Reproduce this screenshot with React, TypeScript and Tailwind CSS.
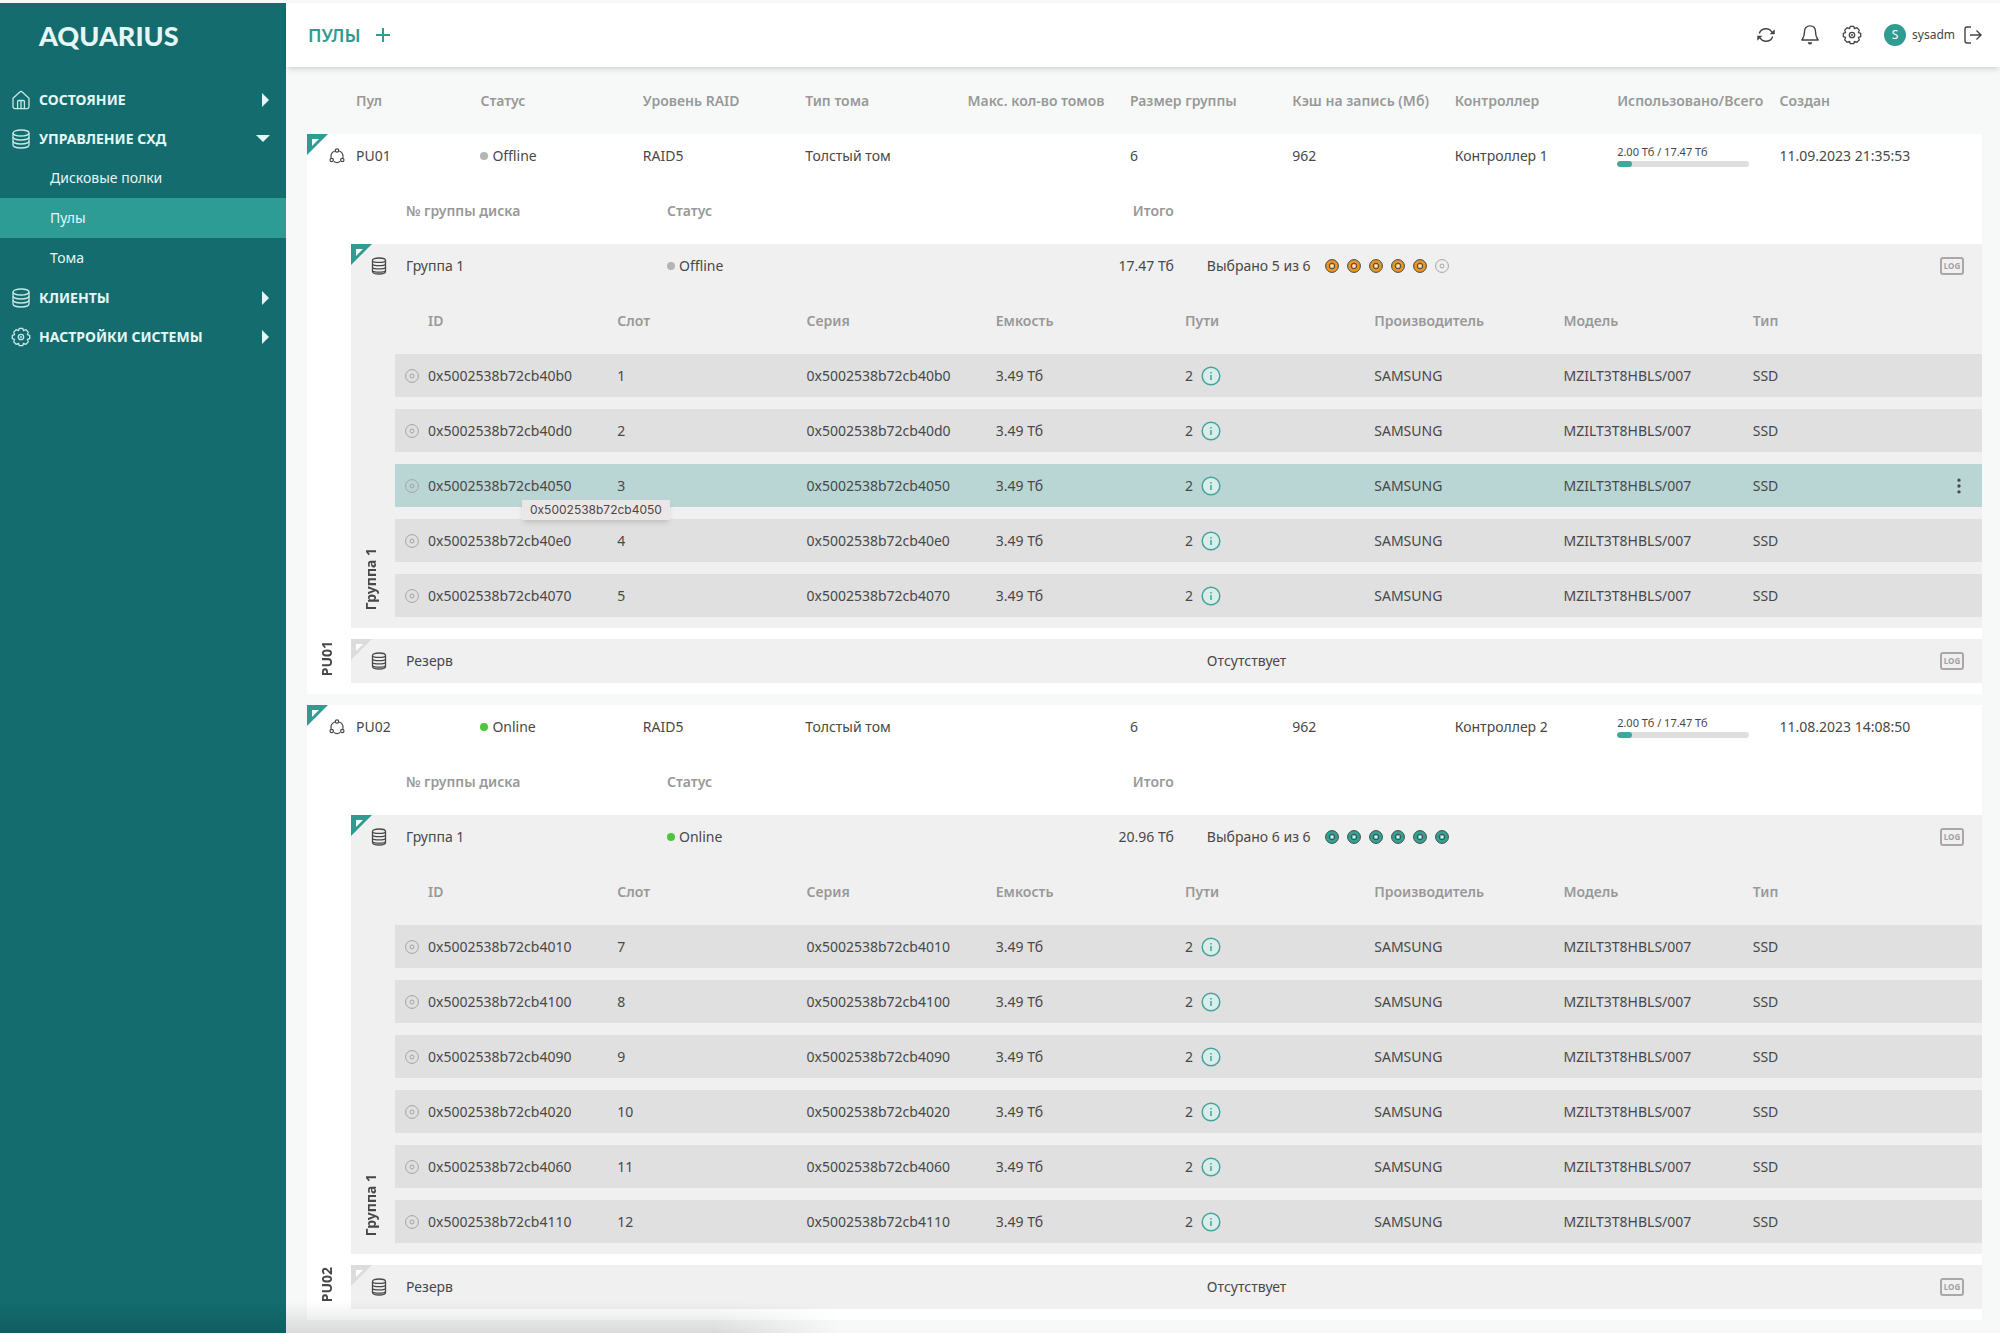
import { MoreVertical } from 'lucide-react';
import clsx from 'clsx';

type Disk = { id: string; slot: number };

type Pool = {
  name: string;
  online: boolean;
  controller: string;
  created: string;
  total: string;
  selected: number;
  disks: Disk[];
};

const POOLS: Pool[] = [
  {
    name: 'PU01',
    online: false,
    controller: 'Контроллер 1',
    created: '11.09.2023 21:35:53',
    total: '17.47 Тб',
    selected: 5,
    disks: [
      { id: '0x5002538b72cb40b0', slot: 1 },
      { id: '0x5002538b72cb40d0', slot: 2 },
      { id: '0x5002538b72cb4050', slot: 3 },
      { id: '0x5002538b72cb40e0', slot: 4 },
      { id: '0x5002538b72cb4070', slot: 5 },
    ],
  },
  {
    name: 'PU02',
    online: true,
    controller: 'Контроллер 2',
    created: '11.08.2023 14:08:50',
    total: '20.96 Тб',
    selected: 6,
    disks: [
      { id: '0x5002538b72cb4010', slot: 7 },
      { id: '0x5002538b72cb4100', slot: 8 },
      { id: '0x5002538b72cb4090', slot: 9 },
      { id: '0x5002538b72cb4020', slot: 10 },
      { id: '0x5002538b72cb4060', slot: 11 },
      { id: '0x5002538b72cb4110', slot: 12 },
    ],
  },
];

const HOVERED_DISK = '0x5002538b72cb4050';

const POOL_COLUMNS = [
  'Статус',
  'Уровень RAID',
  'Тип тома',
  'Макс. кол-во томов',
  'Размер группы',
  'Кэш на запись (Мб)',
  'Контроллер',
  'Использовано/Всего',
  'Создан',
];

const DISK_COLUMNS = ['ID', 'Слот', 'Серия', 'Емкость', 'Пути', 'Производитель', 'Модель', 'Тип'];

function HomeIcon() {
  return (
    <svg viewBox="0 0 20 20" className="size-5" fill="none" stroke="currentColor" strokeWidth="1.3">
      <path d="M2 8.2 8.8 1.9a1.8 1.8 0 0 1 2.4 0L18 8.2v8.6a1.8 1.8 0 0 1-1.8 1.8H3.8A1.8 1.8 0 0 1 2 16.8z" />
      <path d="M6.6 18.5v-7a1 1 0 0 1 1-1h4.8a1 1 0 0 1 1 1v7M10 10.5v8" />
    </svg>
  );
}

function DatabaseIcon() {
  return (
    <svg viewBox="0 0 20 20" className="size-5" fill="none" stroke="currentColor" strokeWidth="1.3">
      <ellipse cx="10" cy="4" rx="8" ry="3" />
      <path d="M2 4v12c0 1.700 3.600 3 8 3s8-1.300 8-3V4" />
      <path d="M2 8c0 1.700 3.600 3 8 3s8-1.300 8-3M2 12c0 1.700 3.600 3 8 3s8-1.300 8-3" />
    </svg>
  );
}

function GearIcon() {
  return (
    <svg viewBox="0 0 20 20" className="size-5" fill="none" stroke="currentColor" strokeWidth="1.3" strokeLinejoin="round">
      <path d="M8.300 1.300h3.400l.7 2.300 2.500-.9 2.400 2.400-.9 2.500 2.300.7v3.400l-2.300.7.9 2.500-2.400 2.400-2.500-.9-.7 2.300H8.300l-.7-2.300-2.500.9-2.400-2.400.9-2.500-2.300-.7V8.300l2.300-.7-.9-2.500 2.400-2.400 2.500.9z" />
      <circle cx="10" cy="10" r="2.700" />
      <circle cx="10" cy="10" r=".4" />
    </svg>
  );
}

function RefreshIcon() {
  return (
    <svg viewBox="0 0 20 20" className="size-5" fill="none" stroke="currentColor" strokeWidth="1.4">
      <path d="M3.300 8.500A7 7 0 0 1 16 7.300M16.700 11.500A7 7 0 0 1 4 12.700" />
      <path d="M18.700 4.300v5h-5zM1.300 15.700v-5h5z" fill="currentColor" stroke="none" />
    </svg>
  );
}

function BellIcon() {
  return (
    <svg viewBox="0 0 20 20" className="size-5" fill="none" stroke="currentColor" strokeWidth="1.3" strokeLinejoin="round">
      <path d="M10 .8c3.500 0 5.500 2.500 5.500 5.800 0 4.400 1 6.400 2.700 8.400H1.800c1.700-2 2.700-4 2.700-8.400C4.500 3.300 6.500.8 10 .8z" />
      <path d="M7.800 17.300h4.400a2.200 2.200 0 0 1-4.400 0z" fill="currentColor" stroke="none" />
    </svg>
  );
}

function LogoutIcon() {
  return (
    <svg viewBox="0 0 20 20" className="size-5" fill="none" stroke="currentColor" strokeWidth="1.4">
      <path d="M8 2H4a2 2 0 0 0-2 2v12a2 2 0 0 0 2 2h4M7 10h11M13.500 5.500 18 10l-4.500 4.500" />
    </svg>
  );
}

function PoolIcon() {
  return (
    <svg viewBox="0 0 16 16" className="size-4" fill="none" stroke="currentColor" strokeWidth="1.200">
      <path d="M5.800 3A6 6 0 0 0 2.200 9.800M10.200 3a6 6 0 0 1 3.600 6.800M4.800 13.600a6 6 0 0 0 6.400 0" />
      <circle cx="8" cy="2.500" r="1.700" />
      <circle cx="2.700" cy="12" r="1.700" />
      <circle cx="13.300" cy="12" r="1.700" />
    </svg>
  );
}

function GroupIcon() {
  return (
    <svg viewBox="0 0 16 18" className="h-[18px] w-4" fill="none" stroke="currentColor" strokeWidth="1.300">
      <path d="M1.500 3.500C1.500 2 4.400 1 8 1s6.500 1 6.500 2.500v11C14.500 16 11.600 17 8 17s-6.500-1-6.500-2.500z" />
      <path d="M1.500 4.200C3 5.700 13 5.700 14.500 4.200M1.500 7.500C3 9 13 9 14.500 7.500M1.500 10.800c1.500 1.500 11.500 1.500 13 0M1.500 14c1.500 1.500 11.500 1.500 13 0" />
    </svg>
  );
}

function DiskIcon() {
  return (
    <svg viewBox="0 0 14 14" className="size-[14px] shrink-0 text-[#a3a3a3]" fill="none" stroke="currentColor">
      <circle cx="7" cy="7" r="6.400" />
      <circle cx="7" cy="7" r="2" />
    </svg>
  );
}

function SlotDot({ tone }: { tone: 'orange' | 'teal' | 'empty' }) {
  if (tone === 'empty') return <DiskIcon />;
  return (
    <svg
      viewBox="0 0 14 14"
      className={clsx('size-[14px] shrink-0', tone === 'orange' ? 'text-[#e8962a]' : 'text-[#35a296]')}
    >
      <circle cx="7" cy="7" r="6.400" fill="currentColor" stroke="#3f4a44" />
      <circle cx="7" cy="7" r="2.800" fill="#ffffff" fillOpacity=".3" stroke="#3f4a44" />
      <circle cx="7" cy="7" r="1" fill="#ffffff" />
    </svg>
  );
}

function InfoIcon() {
  return (
    <svg viewBox="0 0 20 20" className="size-5" fill="none" stroke="currentColor" strokeWidth="1.500">
      <circle cx="10" cy="10" r="8.800" fill="#d9eeeb" />
      <path d="M10 9v5M10 6v1.500" />
    </svg>
  );
}

function Corner({ muted = false }: { muted?: boolean }) {
  return (
    <svg
      viewBox="0 0 21 21"
      className={clsx('absolute left-0 top-0 size-[21px]', muted ? 'text-[#dcdcdc]' : 'text-[#2f9b91]')}
    >
      <path d="M0 0h21L0 21z" fill="currentColor" />
      <path d="M5 5h7l-7 7z" fill="#ffffff" />
    </svg>
  );
}

function Status({ online }: { online: boolean }) {
  return (
    <span className="flex items-center gap-1">
      <span className={clsx('size-2 rounded-full', online ? 'bg-[#4cc63a]' : 'bg-[#b5b5b5]')} />
      {online ? 'Online' : 'Offline'}
    </span>
  );
}

function LogButton() {
  return (
    <button
      type="button"
      className="flex h-[18px] w-6 items-center justify-center rounded-[3px] border-2 border-[#a8a8a8] text-[8px] leading-none font-bold text-[#a0a0a0]"
    >
      LOG
    </button>
  );
}

function MenuItem({ icon, label, open = false }: { icon: React.ReactNode; label: string; open?: boolean }) {
  return (
    <button type="button" aria-expanded={open} className="flex h-[39px] w-full items-center pl-[11px] pr-4 text-left text-sm font-bold">
      <span className="mr-2 text-[#c9e8e6]">{icon}</span>
      <span className="grow">{label}</span>
      {open ? (
        <svg viewBox="0 0 14 8" className="h-2 w-[14px]" fill="currentColor">
          <path d="M0 0h14L7 7z" />
        </svg>
      ) : (
        <svg viewBox="0 0 8 14" className="h-[14px] w-2" fill="currentColor">
          <path d="M0 0v14l7-7z" />
        </svg>
      )}
    </button>
  );
}

function SubItem({ label, active = false }: { label: string; active?: boolean }) {
  return (
    <a href="#" className={clsx('flex h-10 items-center pl-[50px] text-sm', active && 'bg-[#2d9c95]')}>
      {label}
    </a>
  );
}

function Sidebar() {
  return (
    <nav className="w-[286px] shrink-0 bg-[#146c6e] text-[#e4f7f6]">
      <div className="flex h-[77px] items-start pl-[39px] pt-[17px]">
        <span className="font-['Lato',sans-serif] text-[27px] leading-8 font-black">AQUARIUS</span>
      </div>
      <MenuItem icon={<HomeIcon />} label="СОСТОЯНИЕ" />
      <MenuItem icon={<DatabaseIcon />} label="УПРАВЛЕНИЕ СХД" open />
      <SubItem label="Дисковые полки" />
      <SubItem label="Пулы" active />
      <SubItem label="Тома" />
      <MenuItem icon={<DatabaseIcon />} label="КЛИЕНТЫ" />
      <MenuItem icon={<GearIcon />} label="НАСТРОЙКИ СИСТЕМЫ" />
    </nav>
  );
}

function Header() {
  return (
    <header className="relative flex h-16 items-center justify-between bg-white pl-[22px] pr-[17px] shadow-md">
      <div className="flex items-center gap-4 text-[#2f9b91]">
        <h1 className="text-lg font-semibold">ПУЛЫ</h1>
        <button type="button" aria-label="Добавить пул">
          <svg viewBox="0 0 14 14" className="size-[14px]" stroke="currentColor" strokeWidth="2">
            <path d="M7 0v14M0 7h14" />
          </svg>
        </button>
      </div>
      <div className="flex items-center text-[#444444]">
        <button type="button" aria-label="Обновить" className="mr-6">
          <RefreshIcon />
        </button>
        <button type="button" aria-label="Уведомления" className="mr-[22px]">
          <BellIcon />
        </button>
        <button type="button" aria-label="Настройки" className="mr-[22px]">
          <GearIcon />
        </button>
        <span className="mr-1.5 flex size-[22px] items-center justify-center rounded-full bg-[#2f9b91] text-xs text-white">S</span>
        <span className="mr-2 text-xs">sysadm</span>
        <button type="button" aria-label="Выйти">
          <LogoutIcon />
        </button>
      </div>
    </header>
  );
}

function DiskRow({ disk }: { disk: Disk }) {
  const hovered = disk.id === HOVERED_DISK;
  return (
    <tr className={clsx('h-[43px]', hovered ? 'bg-[#b9d6d4]' : 'bg-[#e0e0e0]')}>
      <td className="pl-[10px]">
        <DiskIcon />
      </td>
      <td className="relative">
        {disk.id}
        {hovered && (
          <span
            role="tooltip"
            className="absolute left-[94px] top-9 z-10 h-5 bg-[#ebe7e6] px-2 font-['Inter',sans-serif] text-xs leading-5 shadow-md"
          >
            {disk.id}
          </span>
        )}
      </td>
      <td>{disk.slot}</td>
      <td>{disk.id}</td>
      <td>3.49 Тб</td>
      <td>
        <span className="flex items-center gap-2">
          2
          <button type="button" aria-label="Пути" className="text-[#45a39b]">
            <InfoIcon />
          </button>
        </span>
      </td>
      <td>SAMSUNG</td>
      <td>MZILT3T8HBLS/007</td>
      <td>SSD</td>
      <td>
        {hovered && (
          <button type="button" aria-label="Действия" className="flex w-[34px] justify-center">
            <MoreVertical className="size-5" />
          </button>
        )}
      </td>
    </tr>
  );
}

function DiskTable({ disks }: { disks: Disk[] }) {
  return (
    <table className="w-full table-fixed text-left">
      <thead>
        <tr className="h-[66px] text-[#999999]">
          <th className="w-[33px]" />
          {DISK_COLUMNS.map((name) => (
            <th key={name} className="font-semibold">
              {name}
            </th>
          ))}
          <th className="w-10" />
        </tr>
      </thead>
      {disks.map((disk, index) => (
        <tbody key={disk.id}>
          <DiskRow disk={disk} />
          <tr className={index === disks.length - 1 ? 'h-[11px]' : 'h-3'} />
        </tbody>
      ))}
    </table>
  );
}

function GroupTable({ pool }: { pool: Pool }) {
  return (
    <table className="min-w-0 flex-1 table-fixed text-left">
      <thead>
        <tr className="h-[66px] text-[#999999]">
          <th className="w-[55px]" />
          <th className="w-[16%] font-semibold">№ группы диска</th>
          <th className="w-[16%] font-semibold">Статус</th>
          <th className="w-[16%] pr-[15px] text-right font-semibold">Итого</th>
          <th />
          <th className="w-[42px]" />
        </tr>
      </thead>
      <tbody>
        <tr className="h-11 bg-[#f0f0f0]">
          <td className="relative pl-5">
            <Corner />
            <GroupIcon />
          </td>
          <td>Группа 1</td>
          <td>
            <Status online={pool.online} />
          </td>
          <td className="pr-[15px] text-right">{pool.total}</td>
          <td className="pl-[18px]">
            <span className="flex items-center gap-2">
              <span className="mr-1.5">Выбрано {pool.selected} из 6</span>
              {Array.from({ length: 6 }, (_, i) => (
                <SlotDot key={i} tone={i >= pool.selected ? 'empty' : pool.online ? 'teal' : 'orange'} />
              ))}
            </span>
          </td>
          <td>
            <LogButton />
          </td>
        </tr>
        <tr className="bg-[#f0f0f0]">
          <td colSpan={6}>
            <div className="flex">
              <div className="flex w-11 shrink-0 items-end justify-center pr-1 pb-[18px]">
                <span className="rotate-180 font-bold [writing-mode:vertical-rl]">Группа 1</span>
              </div>
              <DiskTable disks={pool.disks} />
            </div>
          </td>
        </tr>
        <tr className="h-[11px]" />
        <tr className="h-11 bg-[#f0f0f0]">
          <td className="relative pl-5">
            <Corner muted />
            <GroupIcon />
          </td>
          <td colSpan={3}>Резерв</td>
          <td className="pl-[18px]">Отсутствует</td>
          <td>
            <LogButton />
          </td>
        </tr>
        <tr className="h-[11px]" />
      </tbody>
    </table>
  );
}

function PoolRows({ pool }: { pool: Pool }) {
  return (
    <tbody>
      <tr className="h-11 bg-white">
        <td className="relative">
          <Corner />
        </td>
        <td>
          <span className="flex items-center">
            <span className="flex w-[38px] justify-center">
              <PoolIcon />
            </span>
            {pool.name}
          </span>
        </td>
        <td>
          <Status online={pool.online} />
        </td>
        <td>RAID5</td>
        <td>Толстый том</td>
        <td />
        <td>6</td>
        <td>962</td>
        <td>{pool.controller}</td>
        <td className="pr-[31px]">
          <div className="text-[11px] leading-[14px]">2.00 Тб / 17.47 Тб</div>
          <div className="mt-0.5 h-1.5 overflow-hidden rounded-full bg-[#dedede]">
            <div className="h-full w-[11%] rounded-full bg-[#3fa89c]" />
          </div>
        </td>
        <td>{pool.created}</td>
        <td />
      </tr>
      <tr className="bg-white">
        <td colSpan={12}>
          <div className="flex">
            <div className="flex w-11 shrink-0 items-end justify-center pr-1 pb-[18px]">
              <span className="rotate-180 font-bold [writing-mode:vertical-rl]">{pool.name}</span>
            </div>
            <GroupTable pool={pool} />
          </div>
        </td>
      </tr>
      <tr className="h-[11px]" />
    </tbody>
  );
}

export default function App() {
  return (
    <div className="relative flex min-h-screen flex-col bg-[#f7f9f8] pt-[3px] font-['Noto_Sans',sans-serif] text-sm text-[#484848]">
      <div className="flex grow">
        <Sidebar />
        <div className="flex min-w-0 grow flex-col">
          <Header />
          <main className="pl-[21px] pr-[18px]">
            <table className="w-full table-fixed text-left">
              <thead>
                <tr className="h-[67px] text-[#999999]">
                  <th className="w-[11px]" />
                  <th className="pl-[38px] font-semibold">Пул</th>
                  {POOL_COLUMNS.map((name) => (
                    <th key={name} className="font-semibold whitespace-nowrap">
                      {name}
                    </th>
                  ))}
                  <th className="w-10" />
                </tr>
              </thead>
              {POOLS.map((pool) => (
                <PoolRows key={pool.name} pool={pool} />
              ))}
            </table>
          </main>
        </div>
      </div>
      {/* soft shade along the bottom edge */}
      <div className="pointer-events-none absolute bottom-0 left-0 h-8 w-[42%] bg-linear-to-t from-black/12 to-transparent mask-r-from-85%" />
    </div>
  );
}
